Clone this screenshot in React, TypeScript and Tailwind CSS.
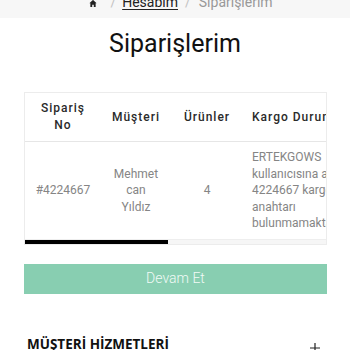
import React from "react";

const orders = [
  {
    no: "#4224667",
    customer: "Mehmet can Yıldız",
    items: "4",
    cargo: "ERTEKGOWS kullanıcısına ait 4224667 kargo anahtarı bulunmamaktadır",
    date: "12.03.2024",
    total: "1.249,90 TL",
    status: "Hazırlanıyor",
  },
];

const HomeIcon = () => (
  <svg width="8" height="9" viewBox="0 0 10 10" fill="#222">
    <path d="M5 0.5 L9.5 4.6 H8.3 V9.5 H6 V6.6 H4 V9.5 H1.7 V4.6 H0.5 Z" />
  </svg>
);

export default function App() {
  return (
    <div className="min-h-[350px] bg-white font-['Roboto',sans-serif] overflow-hidden">
      {/* breadcrumb */}
      <div className="bg-[#f7f7f7] pb-[6px]">
        <div className="-mt-[8px] flex items-center justify-center pl-[12px] text-[14px] leading-[20px]">
          <span className="pt-[3px] mr-[13px]"><HomeIcon /></span>
          <span className="text-[#c4c4c4] mr-[6px]">/</span>
          <a className="text-[#222] underline underline-offset-2 mr-[7px]">Hesabım</a>
          <span className="text-[#c4c4c4] mr-[8px]">/</span>
          <span className="text-[#999]">Siparişlerim</span>
        </div>
      </div>

      <h1 className="mt-[11px] text-center text-[25px] leading-[30px] text-[#111]">Siparişlerim</h1>

      <div className="px-[24px] pr-[23px]">
        <div className="mt-[33px] border border-[#ececec]">
          <div className="overflow-hidden">
            <table className="table-fixed border-collapse w-[640px]">
              <colgroup>
                <col className="w-[76px]" />
                <col className="w-[70px]" />
                <col className="w-[72px]" />
                <col className="w-[130px]" />
                <col className="w-[100px]" />
                <col className="w-[92px]" />
                <col className="w-[100px]" />
              </colgroup>
              <thead>
                <tr className="border-b border-[#e6e6e6] text-[12px] leading-[17px] tracking-[1px] text-[#2a2a2a]">
                  <th className="px-[10px] py-[7px] text-center font-medium">Sipariş No</th>
                  <th className="px-[6px] py-[7px] text-center font-medium">Müşteri</th>
                  <th className="px-[6px] py-[7px] text-center font-medium">Ürünler</th>
                  <th className="px-[9px] py-[7px] text-left font-medium whitespace-nowrap">Kargo Durumu</th>
                  <th className="px-[10px] py-[7px] text-center font-medium">Tarih</th>
                  <th className="px-[10px] py-[7px] text-center font-medium">Tutar</th>
                  <th className="px-[10px] py-[7px] text-center font-medium">Durum</th>
                </tr>
              </thead>
              <tbody>
                {orders.map((o) => (
                  <tr key={o.no} className="text-[12px] leading-[16.5px] text-[#858585]">
                    <td className="px-[8px] py-[7px] text-center">{o.no}</td>
                    <td className="px-[10px] py-[7px] text-center">{o.customer}</td>
                    <td className="px-[8px] py-[7px] text-center">{o.items}</td>
                    <td className="px-[9px] py-[7px] text-left">{o.cargo}</td>
                    <td className="px-[10px] py-[7px] text-center">{o.date}</td>
                    <td className="px-[10px] py-[7px] text-center">{o.total}</td>
                    <td className="px-[10px] py-[7px] text-center">{o.status}</td>
                  </tr>
                ))}
              </tbody>
            </table>
          </div>
          {/* horizontal scrollbar */}
          <div className="h-[5px] bg-[#f6f6f6] border-t border-[#eeeeee]">
            <div className="h-[4px] w-[143px] bg-black" />
          </div>
        </div>

        <button className="mt-[19px] w-full h-[30px] bg-[#88ceb1] text-[#f2faf6] text-[14px] font-light">
          Devam Et
        </button>

        <div className="mt-[41px] flex items-center justify-between pl-[3px] pr-[7px]">
          <span className="font-['Open_Sans',sans-serif] font-bold text-[13.5px] leading-[18px] text-[#111] uppercase">
            MÜŞTERİ HİZMETLERİ
          </span>
          <svg width="10" height="10" viewBox="0 0 10 10" className="mt-[8px]" stroke="#222" strokeWidth="1.2">
            <path d="M5 0 V10 M0 5 H10" />
          </svg>
        </div>
      </div>
    </div>
  );
}
